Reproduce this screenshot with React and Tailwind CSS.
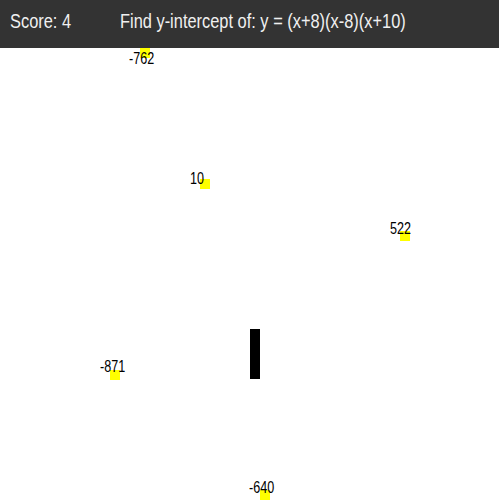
import React from "react";

// falling answers on the play field (page coordinates)
const answers = [
  { value: "-762", sx: 140, sy: 48, tx: 129, base: 64 },
  { value: "10", sx: 200, sy: 179, tx: 190, base: 184 },
  { value: "522", sx: 400, sy: 231, tx: 390, base: 234 },
  { value: "-871", sx: 110, sy: 370, tx: 100, base: 372 },
  { value: "-640", sx: 260, sy: 490, tx: 249, base: 493 },
];

const HEADER = 48;

const App = () => {
  return (
    <div
      className="relative w-[499px] h-[500px] bg-white overflow-hidden flex flex-col"
      style={{ fontFamily: '"Liberation Sans", Arial, sans-serif' }}
    >
      {/* Top bar - score & question (condensed type) */}
      <header className="h-12 shrink-0 bg-[#333333] text-[#f0f0f0] text-[20px] leading-none flex items-start pt-[11px]">
        <span className="w-[120px] pl-[10px]">
          <span className="inline-block origin-left scale-x-[0.82] whitespace-nowrap">Score: 4</span>
        </span>
        <span className="inline-block origin-left scale-x-[0.82] whitespace-nowrap">
          Find y-intercept of: y = (x+8)(x-8)(x+10)
        </span>
      </header>

      {/* Play field */}
      <div className="relative flex-1">
        {answers.map((a) => (
          <div key={a.value}>
            <div
              className="absolute w-[10px] h-[10px] bg-[#ffff00]"
              style={{ left: a.sx, top: a.sy - HEADER }}
            />
            <div
              className="absolute text-[17px] leading-none text-black whitespace-nowrap origin-left scale-x-[0.74]"
              style={{ left: a.tx, top: a.base - 14 - HEADER }}
            >
              {a.value}
            </div>
          </div>
        ))}

        {/* Player paddle */}
        <div className="absolute left-[250px] top-[281px] w-[10px] h-[50px] bg-black" />
      </div>
    </div>
  );
};

export default App;
